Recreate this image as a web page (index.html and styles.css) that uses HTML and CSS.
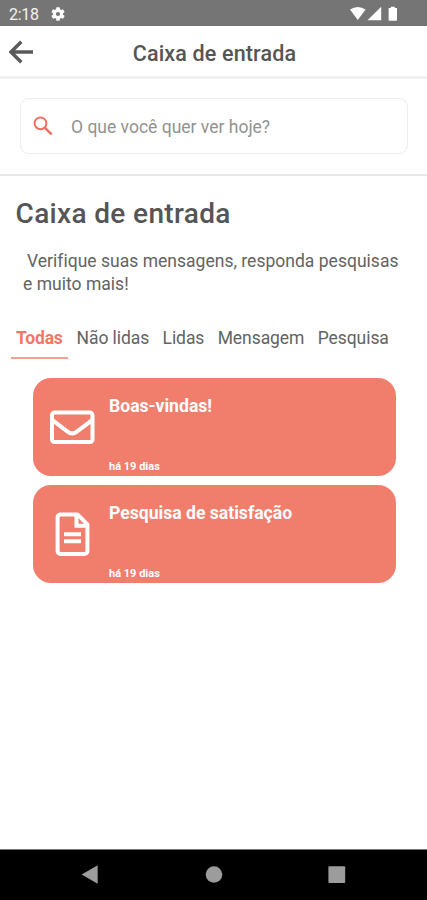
FILE: index.html
```html
<!DOCTYPE html>
<html lang="pt-BR">
<head>
<meta charset="utf-8">
<title>Caixa de entrada</title>
<link rel="stylesheet" href="styles.css">
</head>
<body>
<div class="status">
  <span class="clock">2:18</span>
  <svg class="gear" viewBox="2 2 20 20" width="14" height="14"><path fill="#fff" d="M19.14 12.94c.04-.3.06-.61.06-.94s-.02-.64-.07-.94l2.03-1.58a.49.49 0 0 0 .12-.61l-1.92-3.32a.49.49 0 0 0-.59-.22l-2.39.96a7 7 0 0 0-1.62-.94l-.36-2.54a.48.48 0 0 0-.48-.41h-3.84a.47.47 0 0 0-.47.41l-.36 2.54c-.59.24-1.13.57-1.62.94l-2.39-.96a.48.48 0 0 0-.59.22L2.74 8.87a.47.47 0 0 0 .12.61l2.03 1.58a6 6 0 0 0 0 1.88l-2.03 1.58a.49.49 0 0 0-.12.61l1.92 3.32c.12.22.37.29.59.22l2.39-.96c.5.38 1.03.7 1.62.94l.36 2.54c.05.24.24.41.48.41h3.84c.24 0 .44-.17.47-.41l.36-2.54a7 7 0 0 0 1.62-.94l2.39.96c.22.08.47 0 .59-.22l1.92-3.32a.47.47 0 0 0-.12-.61zM12 15a3 3 0 1 1 0-6 3 3 0 0 1 0 6z"/></svg>
  <svg class="signals" viewBox="0 0 50 16" width="50" height="16"><g fill="#fff"><path d="M1 3.500Q8.800-1.500 16.600 3.500L8.800 14Z"/><path d="M32.200.8V14.200H18.500Z"/><path d="M41.800.7h4v1.200h2.200V13.700a1 1 0 0 1-1 1h-6.400a1 1 0 0 1-1-1V1.900h2.200z"/></g></svg>
</div>
<header class="bar">
  <svg class="back" viewBox="0 0 24 24" width="24" height="24"><path d="M12.300 1.700 2 12l10.300 10.300M2.500 12H24" fill="none" stroke="#5a5a5a" stroke-width="3.400"/></svg>
  <span class="bar-title">Caixa de entrada</span>
</header>
<section class="search">
  <div class="field">
    <svg class="lens" viewBox="0 0 20 20" width="20" height="20"><g fill="none" stroke="#f0705f" stroke-width="2"><circle cx="7.500" cy="7.300" r="5.900"/><path d="m11.800 11.600 6.800 6.800" stroke-width="2.500"/></g></svg>
    <span class="hint">O que você quer ver hoje?</span>
  </div>
</section>
<main>
  <h1>Caixa de entrada</h1>
  <p class="intro"><span class="indent">Verifique suas mensagens, responda pesquisas</span><br>e muito mais!</p>
  <nav class="tabs">
    <span class="tab active">Todas</span><span class="tab">Não lidas</span><span class="tab">Lidas</span><span class="tab">Mensagem</span><span class="tab">Pesquisa</span>
  </nav>
  <div class="cards">
    <article class="card">
      <div class="icon"><svg viewBox="0 0 46 46" width="46" height="46"><g transform="translate(0 .6)" fill="none" stroke="#fff" stroke-width="4" stroke-linejoin="round"><rect x="3" y="8" width="40.500" height="29.500" rx="2.500"/><path d="M3.500 15.500 18.500 27q4.700 3.600 9.400 0L43 15.500"/></g></svg></div>
      <div class="text"><h2>Boas-vindas!</h2><time>há 19 dias</time></div>
    </article>
    <article class="card">
      <div class="icon"><svg viewBox="0 0 46 46" width="46" height="46"><g transform="translate(.5 .4)" fill="none" stroke="#fff"><path d="M11.100 3H28L37.900 13V39.500a3 3 0 0 1-3 3H11.100a3 3 0 0 1-3-3V6a3 3 0 0 1 3-3z" stroke-width="4" stroke-linejoin="round"/><path d="M27 3.500V14.300H38M14.500 22.800H31.500M14.500 29.900H31.500" stroke-width="4"/></g></svg></div>
      <div class="text"><h2>Pesquisa de satisfação</h2><time>há 19 dias</time></div>
    </article>
  </div>
</main>
<footer class="navbar">
  <svg viewBox="0 0 18 20" width="18" height="20"><path fill="#9c9c9c" d="M16.700.3V18.700L.6 9.500z"/></svg>
  <svg viewBox="0 0 18 18" width="18" height="18"><circle cx="9" cy="8.500" r="8.300" fill="#9c9c9c"/></svg>
  <svg viewBox="0 0 18 18" width="18" height="18"><rect x=".4" y=".2" width="16.800" height="16.800" rx="1" fill="#9c9c9c"/></svg>
</footer>
</body>
</html>
```
FILE: styles.css
```css
* { box-sizing: border-box; }
body { margin: 0; width: 427px; height: 900px; display: flex; flex-direction: column; background: #fff; color: #555; font-family: Roboto, "Liberation Sans", sans-serif; overflow: hidden; white-space: nowrap; }
svg { display: block; flex: none; }
h1, h2, p { margin: 0; }

.status { height: 26px; flex: none; background: #757575; display: flex; align-items: center; padding: 2px 28px 0 9px; color: #f2f2f2; }
.clock { width: 42px; font-size: 16px; line-height: 20px; letter-spacing: -.3px; padding-top: 1px; }
.signals { margin-left: auto; }

.bar { height: 53px; flex: none; display: grid; grid-template-columns: 40px 1fr 47px; align-items: center; padding: 1px 0 0 9px; border-bottom: 3px solid #f1f1f1; }
.bar-title { text-align: center; font-size: 21.500px; font-weight: 500; line-height: 28px; padding-top: 4px; letter-spacing: .15px; color: #555; }

.search { height: 97px; flex: none; padding: 19px 19px 0 20px; border-bottom: 2px solid #e7e7e7; }
.field { height: 56px; border: 1.500px solid #ededed; border-radius: 9px; display: flex; align-items: center; padding-left: 12px; }
.hint { margin-left: 18px; padding-top: 2px; font-size: 17.500px; color: #929292; }

main { flex: 1; padding-top: 21px; }
h1 { padding-left: 15.500px; font-size: 28px; line-height: 34px; font-weight: 500; letter-spacing: .35px; }
.intro { padding: 19px 0 0 23px; font-size: 17.500px; line-height: 23px; letter-spacing: .02px; color: #636363; }
.indent { margin-left: 4px; }
.tabs { display: flex; margin-top: 30px; padding-left: 11px; font-size: 17.500px; line-height: 24px; letter-spacing: -.06px; }
.tab { height: 33px; margin-right: 13.300px; color: #636363; }
.tab.active { width: 56.500px; padding-left: 5px; margin-right: 9px; border-bottom: 2px solid #f4a093; color: #f07767; font-weight: 700; letter-spacing: -.15px; }

.cards { display: flex; flex-direction: column; gap: 9px; padding: 19px 31px 0 33px; }
.card { height: 98px; border-radius: 18px; background: #f17e6d; color: #fff; display: flex; }
.icon { width: 76px; padding: 26px 0 0 16px; }
.text { display: flex; flex-direction: column; padding: 16px 0 2px; }
h2 { font-size: 17.600px; line-height: 24px; font-weight: 700; }
time { margin-top: auto; font-size: 11px; line-height: 14px; font-weight: 700; }

.navbar { height: 51px; flex: none; display: flex; align-items: center; justify-content: space-between; padding: 0 81px; background: #000; border-top: 1px solid #777; }
```
